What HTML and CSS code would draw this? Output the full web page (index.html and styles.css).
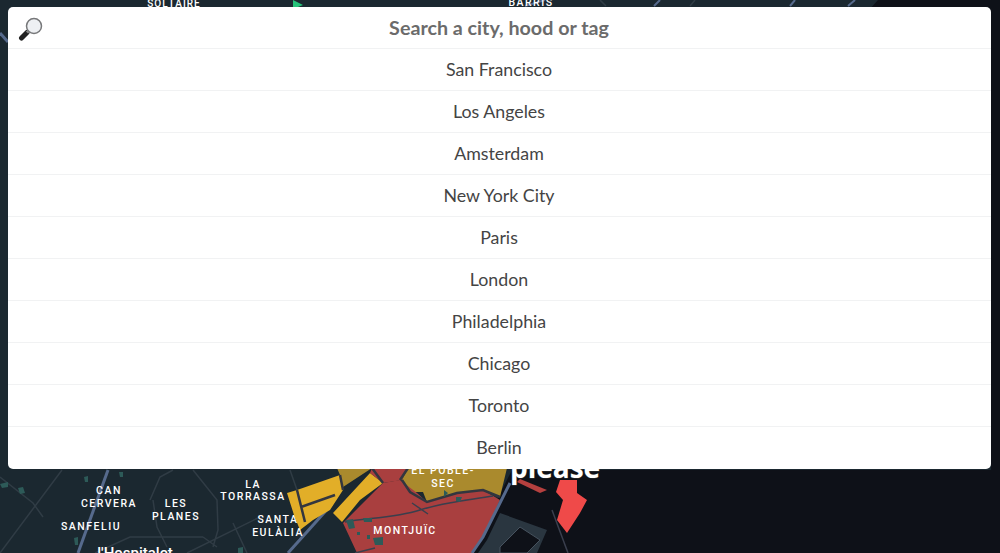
FILE: index.html
```html
<!DOCTYPE html>
<html lang="en">

<head>
    <meta charset="UTF-8">
    <title>Search a city</title>
    <link rel="stylesheet" href="styles.css">
</head>

<body>
    <!-- map behind the search panel -->
    <svg class="map" width="1000" height="553" viewBox="0 0 1000 553">
        <rect width="1000" height="553" fill="#0e1118" />
        <path class="land" d="M0 0H878L860 20L991 40V470H512L470 553H0Z" />

        <!-- roads -->
        <path class="road" d="M62 470L0 553M0 477L33 503L43 517M150 500L160 477L173 470M193 470L217 500L218 530L213 547M153 500L157 527L167 547M95 553L130 537L157 537L203 537M187 553L260 517M203 537L217 547M233 523L247 553M290 470L297 490" />
        <path class="highway" d="M108 470L78 553" />
        <path class="highway" d="M0 33L8 42" />
        <path class="highway" d="M288 553L332 504" />
        <path class="highway thin" d="M660 0L654 6M795 0L790 6M855 0L848 6M525 6L545 0" />
        <path class="road" d="M600 0L606 6M695 0L690 6" />

        <!-- parks -->
        <path class="park" d="M0 484L8 482L8 487L2 488ZM18 488L23 487L25 493L20 494ZM84 477L88 476L88 482L85 482ZM119 472L123 472L123 477L120 477ZM74 538L78 537L78 545L75 545ZM238 548L243 547L243 553L238 553Z" />
        <path class="spot" d="M293 0L303 5L298 7H293Z" />

        <!-- hoods -->
        <path class="hood-olive" d="M337 468H372L343 487L340 475Z" />
        <path class="hood-yellow" d="M287 493L297 490L340 475L343 490L330 510L313 520L300 530L294 515Z" />
        <path class="hood-yellow" d="M333 513L370 473L383 483L360 500L342 522Z" />
        <path class="hood-red" d="M372 468H408L402 480L383 483L370 473Z" />
        <path class="hood-olive" d="M408 468H507L500 497L483 490L457 493L427 502L423 492L410 492L402 480Z" />
        <path class="hood-red" d="M343 523L383 483L400 480L417 493L427 502L457 493L483 490L500 500L483 537L473 553H357Z" />
        <path class="line-dark" d="M297 490L305 522M340 475L343 490M372 468L383 483M402 480L410 492L427 502L457 493L483 490L500 497M408 468L400 480M301 507L335 495" />
        <path class="line-thin" d="M345 522C365 518 395 518 420 510C445 502 470 500 493 496M412 503L428 514M355 553L375 548" />
        <path class="park" d="M346 520L353 519L355 528L349 529ZM373 538L383 537L383 545L375 545ZM363 518H372V522H364ZM444 490L448 493L444 497ZM456 497L462 497L460 502L456 501ZM357 532L360 532V535H357ZM367 535H370V539H367Z" />

        <!-- port -->
        <path class="dock" d="M487 540L500 513L547 530L537 553H478Z" />
        <path class="dock-hole" d="M500 547L520 527L540 540L527 553H500Z" />
        <path class="highway" d="M510 483L483 537L472 553" />
        <path class="line-thin" d="M552 510L568 553" />
        <path class="port-dim" d="M520 479L547 490L540 493L517 482Z" />
        <path class="port-red" d="M560 480H577V493L587 500L580 513L567 533L557 520L563 500L556 492Z" />

        <!-- labels -->
        <text class="label" x="109" y="494" text-anchor="middle">CAN</text>
        <text class="label" x="109" y="507" text-anchor="middle">CERVERA</text>
        <text class="label" x="176" y="507" text-anchor="middle">LES</text>
        <text class="label" x="176" y="520" text-anchor="middle">PLANES</text>
        <text class="label" x="91" y="530" text-anchor="middle">SANFELIU</text>
        <text class="label" x="253" y="488" text-anchor="middle">LA</text>
        <text class="label" x="253" y="500" text-anchor="middle">TORRASSA</text>
        <text class="label" x="278" y="523" text-anchor="middle">SANTA</text>
        <text class="label" x="278" y="536" text-anchor="middle">EULÀLIA</text>
        <text class="label" x="405" y="534" text-anchor="middle">MONTJUÏC</text>
        <text class="label" x="443" y="474" text-anchor="middle">EL POBLE-</text>
        <text class="label" x="443" y="487" text-anchor="middle">SEC</text>
        <text class="label tight" x="174" y="7" text-anchor="middle">SOL I AIRE</text>
        <text class="label" x="531" y="6" text-anchor="middle">BARRIS</text>
        <text class="city" x="135" y="558" text-anchor="middle">l'Hospitalet</text>
        <text class="please" x="555" y="478" text-anchor="middle">please</text>
    </svg>

    <div class="panel">
        <div class="row search">
            <svg class="glass" width="26" height="26" viewBox="0 0 26 26">
                <path d="M3.500 22L9 16.500" stroke="#222" stroke-width="5" stroke-linecap="round" />
                <path d="M9 16.500L11.500 14" stroke="#8a8a8a" stroke-width="3" />
                <circle cx="16" cy="10" r="7.500" fill="#eef0f3" stroke="#77787a" stroke-width="1.500" />
            </svg>
            Search a city, hood or tag
        </div>
        <div class="row">San Francisco</div>
        <div class="row">Los Angeles</div>
        <div class="row">Amsterdam</div>
        <div class="row">New York City</div>
        <div class="row">Paris</div>
        <div class="row">London</div>
        <div class="row">Philadelphia</div>
        <div class="row">Chicago</div>
        <div class="row">Toronto</div>
        <div class="row">Berlin</div>
    </div>
</body>

</html>
```

FILE: styles.css
```css
* {
    margin: 0;
    padding: 0;
    box-sizing: border-box;
}

html,
body {
    height: 100%;
    overflow: hidden;
}

body {
    position: relative;
    background-color: #0e1118;
    padding: 7px 9px 0 8px;
    font-family: "Lato", "Open Sans", sans-serif;
}

/* map */
.map {
    position: absolute;
    left: 0;
    top: 0;
}

.land {
    fill: #1b2830;
}

.road {
    fill: none;
    stroke: #303c45;
    stroke-width: 1.500;
}

.highway {
    fill: none;
    stroke: #566a8c;
    stroke-width: 3;
}

.thin {
    stroke-width: 2;
}

.line-dark {
    fill: none;
    stroke: #33363f;
    stroke-width: 2.500;
}

.line-thin {
    fill: none;
    stroke: #3a3f4d;
    stroke-width: 1.500;
}

.dock {
    fill: #2a3640;
}

.dock-hole {
    fill: #0e1118;
    stroke: #46525e;
}

.park {
    fill: #2d5a58;
}

.spot {
    fill: #25c279;
}

.hood-yellow {
    fill: #e2ae28;
}

.hood-olive {
    fill: #aa8a2d;
}

.hood-red {
    fill: #a93f3f;
}

.port-dim {
    fill: #b5403f;
}

.port-red {
    fill: #ef4a49;
}

.label {
    fill: #fff;
    font-family: "Roboto", sans-serif;
    font-size: 10.500px;
    font-weight: 500;
    letter-spacing: 1.500px;
}

.tight {
    font-size: 10px;
    letter-spacing: 1px;
    word-spacing: -2px;
}

.city {
    fill: #fff;
    font-family: "Roboto", sans-serif;
    font-size: 15px;
    font-weight: 500;
}

.please {
    fill: #fff;
    font-family: "Open Sans", sans-serif;
    font-size: 28px;
    font-weight: bold;
    paint-order: stroke;
    stroke: #333;
    stroke-width: 1px;
}

/* search panel */
.panel {
    position: relative;
    background-color: #fff;
    border-radius: 5px;
    overflow: hidden;
}

.row {
    height: 42px;
    display: flex;
    justify-content: center;
    align-items: center;
    border-bottom: 1px solid #f1f2f3;
    padding: 0 1px 1px 0;
    font-size: 17.800px;
    color: #444;
}

.row:last-child {
    border-bottom-color: transparent;
}

.search {
    position: relative;
    font-weight: 700;
    font-size: 19.700px;
    color: #6b6b6b;
}

.glass {
    position: absolute;
    left: 10px;
    top: 9px;
}
```
